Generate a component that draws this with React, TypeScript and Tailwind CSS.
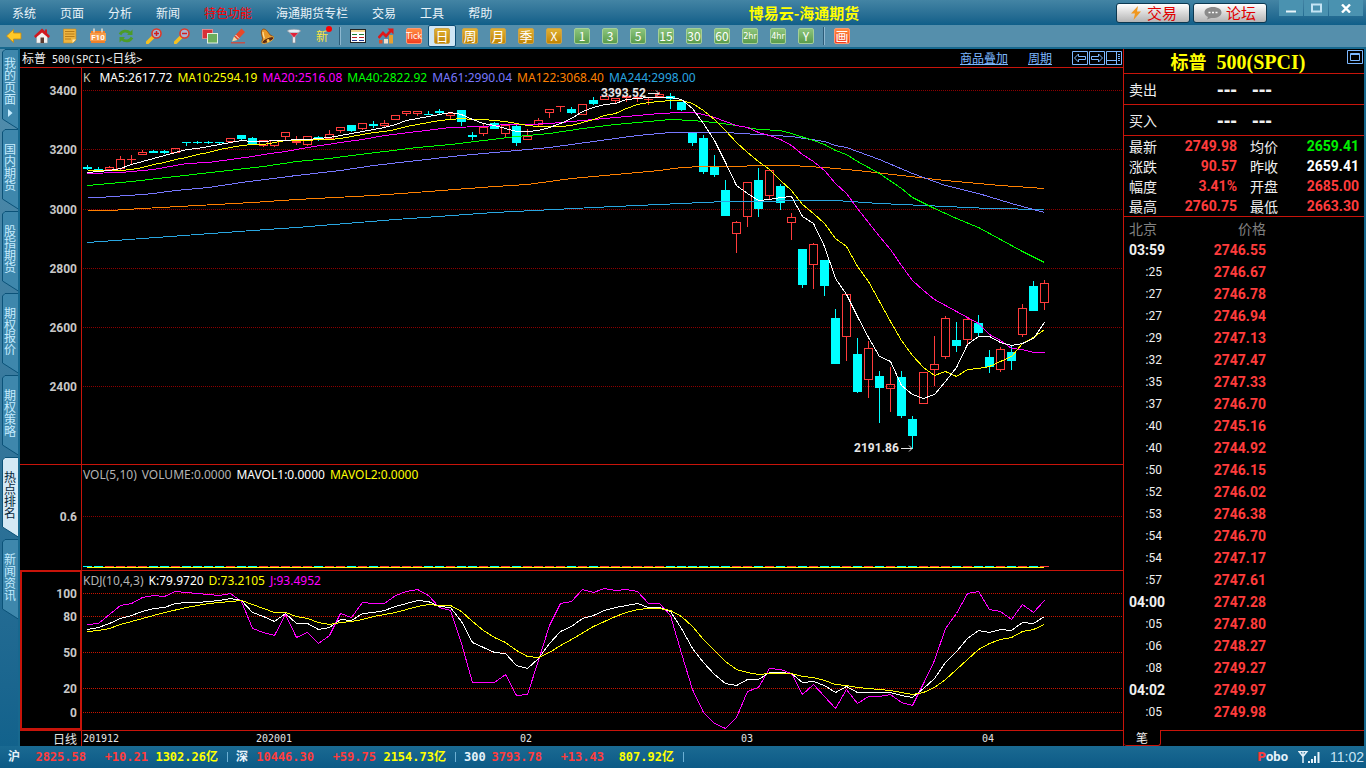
import type { ReactNode } from "react";

const STEP = 11;
const FIRST_X = 67.5;

// [body top, body bottom, wick top, wick bottom, direction]
type Candle = [number, number, number, number, "u" | "d"];

const CANDLES: Candle[] = [
  [167, 169, 165, 170, "d"], [169, 170, 167, 171, "d"], [167, 169, 166, 169, "u"], [159, 168, 156, 169, "u"],
  [159, 159, 155, 163, "u"], [152, 154, 150, 154, "u"], [151, 153, 150, 153, "d"], [151, 153, 150, 154, "d"],
  [148, 152, 148, 152, "u"], [142, 143, 142, 146, "d"], [142, 142, 141, 144, "d"], [142, 142, 141, 144, "d"],
  [142, 142, 142, 144, "d"], [138, 141, 138, 142, "u"], [135, 139, 135, 140, "d"], [138, 144, 137, 144, "d"],
  [140, 145, 140, 146, "u"], [140, 145, 140, 146, "u"], [132, 136, 132, 139, "u"], [141, 142, 136, 144, "u"],
  [136, 144, 136, 145, "u"], [137, 139, 136, 141, "d"], [134, 138, 130, 139, "u"], [127, 130, 127, 132, "u"],
  [125, 131, 125, 132, "d"], [123, 128, 123, 129, "u"], [124, 126, 121, 128, "d"], [123, 125, 120, 126, "u"],
  [115, 119, 115, 119, "u"], [111, 113, 111, 115, "u"], [111, 113, 111, 115, "u"], [114, 115, 111, 115, "d"],
  [111, 113, 109, 115, "d"], [113, 115, 113, 119, "u"], [110, 122, 110, 126, "d"], [135, 137, 132, 140, "d"],
  [127, 133, 124, 135, "u"], [123, 129, 122, 129, "d"], [125, 133, 125, 137, "u"], [126, 143, 125, 146, "d"],
  [136, 139, 129, 139, "u"], [120, 124, 118, 125, "u"], [109, 112, 109, 117, "u"], [106, 106, 106, 111, "u"],
  [109, 113, 107, 114, "d"], [104, 114, 104, 114, "u"], [100, 104, 97, 105, "d"], [96, 99, 96, 99, "u"],
  [98, 100, 98, 102, "u"], [96, 97, 96, 101, "u"], [97, 97, 96, 101, "u"], [99, 99, 97, 104, "u"],
  [94, 96, 92, 96, "u"], [96, 99, 93, 109, "d"], [102, 110, 102, 111, "d"], [133, 143, 133, 146, "d"],
  [138, 172, 135, 174, "d"], [167, 175, 155, 177, "d"], [190, 216, 180, 216, "d"], [222, 233, 221, 252, "u"],
  [182, 216, 182, 226, "u"], [180, 209, 168, 217, "d"], [170, 195, 170, 199, "u"], [186, 203, 184, 210, "d"],
  [217, 222, 213, 239, "u"], [249, 285, 249, 288, "d"], [244, 264, 243, 288, "u"], [260, 286, 260, 296, "d"],
  [318, 364, 309, 364, "d"], [294, 336, 294, 360, "u"], [354, 392, 338, 393, "d"], [348, 379, 341, 397, "u"],
  [376, 388, 371, 423, "d"], [384, 388, 367, 411, "u"], [377, 416, 371, 418, "d"], [419, 436, 416, 449, "d"],
  [372, 403, 372, 403, "u"], [364, 369, 336, 385, "u"], [318, 356, 316, 358, "u"], [340, 346, 322, 352, "d"],
  [319, 339, 317, 343, "u"], [323, 333, 315, 336, "d"], [357, 367, 350, 373, "d"], [349, 369, 347, 371, "u"],
  [352, 361, 345, 370, "d"], [308, 334, 304, 336, "u"], [286, 311, 281, 311, "d"], [283, 302, 280, 309, "u"],
];

// every line is a list of [bar index, y]
type Line = { color: string; points: number[][] };

const seq = (...ys: number[]) => ys.map((y, i) => [i, y]);

const MA_LINES: Line[] = [
  {
    color: "#29a6e0",
    points: [[0, 242], [5, 238], [10, 234], [15, 230], [19, 227], [28, 219], [37, 212], [46, 207], [54, 203], [58, 201], [68, 200], [72, 203], [78, 206], [82, 208], [87, 209]],
  },
  {
    color: "#ff8000",
    points: [[0, 210], [2, 210], [5, 208], [10, 205], [15, 202], [19, 199], [26, 195], [31, 191], [37, 186], [40, 184], [44, 178], [48, 174], [52, 170], [54, 167], [56, 166], [64, 165], [67, 167], [70, 170], [74, 175], [78, 180], [83, 185], [87, 188]],
  },
  {
    color: "#7878ff",
    points: [[0, 197], [1, 197], [5, 194], [6, 193], [8, 190], [11, 187], [14, 182], [19, 175], [23, 170], [26, 165], [30, 160], [34, 155], [38, 151], [42, 147], [46, 141], [50, 135], [53, 132], [58, 132], [61, 134], [64, 136], [67, 141], [68, 145], [69, 147], [72, 159], [75, 173], [78, 185], [81, 193], [84, 203], [87, 212]],
  },
  {
    color: "#00ff00",
    points: [[0, 185], [4, 181], [8, 176], [12, 171], [16, 166], [19, 161], [22, 158], [24, 155], [27, 151], [30, 147], [33, 144], [36, 140], [39, 136], [42, 133], [45, 128], [48, 124], [51, 121], [53, 119], [55, 120], [57, 122], [59, 125], [60, 127], [61, 129], [63, 130], [64, 133], [66, 140], [67, 144], [68, 150], [69, 154], [70, 161], [72, 173], [74, 188], [75, 197], [77, 208], [79, 218], [81, 227], [83, 239], [85, 251], [87, 262]],
  },
  {
    color: "#ff00ff",
    points: [[0, 173], [3, 172], [4, 171], [6, 169], [7, 167], [9, 163], [11, 162], [13, 159], [15, 156], [16, 154], [18, 151], [20, 147], [23, 142], [25, 139], [27, 135], [30, 131], [33, 127], [36, 126], [38, 124], [40, 124], [42, 123], [44, 121], [46, 119], [48, 117], [50, 115], [52, 113], [54, 112], [55, 112], [56, 114], [57, 117], [58, 121], [59, 125], [60, 127], [61, 132], [62, 135], [63, 139], [64, 145], [65, 154], [66, 161], [67, 170], [68, 183], [69, 193], [70, 208], [71, 222], [72, 236], [73, 249], [74, 265], [75, 280], [76, 290], [77, 299], [78, 305], [79, 311], [80, 317], [81, 323], [82, 334], [83, 340], [84, 348], [85, 349], [86, 352], [87, 352]],
  },
  {
    color: "#ffff00",
    points: seq(170, 170, 170, 170, 169, 167, 164, 162, 159, 157, 154, 152, 149, 147, 145, 144, 144, 142, 140, 140, 140, 139, 139, 138, 136, 134, 132, 131, 129, 126, 124, 122, 120, 119, 118, 119, 119, 120, 121, 123, 125, 126, 126, 126, 125, 122, 119, 115, 113, 108, 104, 102, 101, 100, 100, 103, 110, 119, 130, 142, 152, 161, 169, 180, 190, 204, 213, 223, 238, 246, 266, 281, 301, 321, 340, 355, 367, 375, 371, 376, 369, 368, 366, 361, 356, 343, 337, 329),
  },
  {
    color: "#ffffff",
    points: seq(172, 171, 170, 168, 164, 161, 158, 155, 152, 149, 148, 146, 144, 142, 140, 141, 141, 140, 140, 139, 139, 138, 137, 135, 133, 131, 129, 127, 124, 120, 118, 116, 114, 112, 114, 119, 123, 125, 128, 131, 131, 130, 127, 123, 118, 111, 107, 104, 103, 99, 98, 97, 97, 97, 99, 108, 123, 140, 162, 185, 193, 200, 199, 197, 196, 216, 223, 246, 278, 294, 316, 337, 356, 361, 385, 394, 398, 394, 381, 367, 344, 336, 336, 342, 345, 343, 338, 322),
  },
];

const KDJ_LINES: Line[] = [
  {
    color: "#ff00ff",
    points: seq(624, 623, 614, 605, 603, 597, 595, 596, 591, 592, 593, 594, 595, 593, 601, 628, 632, 635, 614, 637, 632, 643, 635, 613, 617, 602, 603, 603, 595, 591, 589, 595, 607, 610, 643, 682, 682, 682, 674, 695, 694, 660, 625, 603, 601, 589, 592, 588, 590, 589, 591, 603, 603, 615, 653, 689, 712, 723, 728, 717, 691, 687, 668, 669, 673, 694, 684, 696, 708, 689, 703, 696, 696, 694, 702, 705, 683, 660, 628, 613, 593, 591, 609, 611, 619, 604, 612, 600),
  },
  {
    color: "#ffffff",
    points: seq(629, 627, 623, 618, 615, 611, 608, 607, 603, 602, 602, 601, 600, 598, 600, 612, 616, 621, 613, 623, 623, 629, 627, 619, 620, 613, 612, 610, 606, 603, 600, 601, 606, 607, 621, 642, 647, 652, 653, 665, 668, 658, 643, 631, 626, 618, 615, 610, 607, 605, 603, 607, 607, 611, 628, 648, 662, 674, 683, 685, 679, 679, 672, 672, 673, 682, 681, 685, 692, 686, 692, 692, 692, 692, 695, 697, 688, 678, 662, 651, 638, 630, 632, 629, 630, 622, 623, 616),
  },
  {
    color: "#ffff00",
    points: [[0, 631], [1, 630], [2, 628], [3, 624], [5, 618], [7, 612], [9, 607], [11, 603], [14, 600], [15, 604], [16, 608], [17, 612], [18, 612], [19, 616], [20, 618], [21, 622], [22, 624], [23, 622], [24, 621], [25, 619], [26, 616], [28, 612], [30, 606], [31, 604], [32, 605], [33, 605], [34, 611], [35, 621], [36, 630], [37, 637], [38, 642], [39, 650], [40, 656], [41, 657], [42, 652], [43, 645], [44, 639], [46, 626], [48, 616], [49, 612], [50, 609], [51, 608], [52, 608], [53, 610], [54, 616], [55, 626], [56, 639], [57, 650], [58, 661], [59, 669], [60, 672], [61, 674], [62, 673], [64, 673], [65, 676], [66, 677], [67, 680], [68, 684], [69, 685], [70, 687], [72, 689], [73, 690], [74, 692], [75, 694], [76, 692], [77, 687], [78, 679], [79, 669], [80, 659], [81, 649], [82, 643], [83, 639], [84, 637], [85, 631], [86, 629], [87, 624]],
  },
];

const MENU = ["系统", "页面", "分析", "新闻", "特色功能", "海通期货专栏", "交易", "工具", "帮助"];
const TABS = ["我的页面", "国内期货", "股指期货", "期权报价", "期权策略", "热点排名", "新闻资讯"];
const PERIODS = ["日", "周", "月", "季", "X"];
const MINUTES = ["1", "3", "5", "15", "30", "60", "2hr", "4hr", "Y"];

const TICKS = [
  ["03:59", "2746.55"], [":25", "2746.67"], [":27", "2746.78"], [":27", "2746.94"], [":29", "2747.13"],
  [":32", "2747.47"], [":35", "2747.33"], [":37", "2746.70"], [":40", "2745.16"], [":40", "2744.92"],
  [":50", "2746.15"], [":52", "2746.02"], [":53", "2746.38"], [":54", "2746.70"], [":54", "2747.17"],
  [":57", "2747.61"], ["04:00", "2747.28"], [":05", "2747.80"], [":06", "2748.27"], [":08", "2749.27"],
  ["04:02", "2749.97"], [":05", "2749.98"],
];

const QUOTES = [
  ["最新", "2749.98", "均价", "2659.41", "text-[#00f000]"],
  ["涨跌", "90.57", "昨收", "2659.41", "text-white"],
  ["幅度", "3.41%", "开盘", "2685.00", "text-[#ff3c3c]"],
  ["最高", "2760.75", "最低", "2663.30", "text-[#ff3c3c]"],
];

const INDEXES = [
  ["沪", "2825.58", "+10.21", "1302.26亿"],
  ["深", "10446.30", "+59.75", "2154.73亿"],
  ["300", "3793.78", "+13.43", "807.92亿"],
];

const NUM = "font-['Roboto','Noto_Sans_CJK_SC',sans-serif] font-bold";
const MONO = "font-['DejaVu_Sans_Mono','Noto_Sans_CJK_SC',monospace]";

const x = (i: number) => FIRST_X + i * STEP;

function Lines({ lines }: { lines: Line[] }) {
  return (
    <g fill="none" shapeRendering="crispEdges">
      {lines.map((l, n) => (
        <polyline key={n} stroke={l.color} points={l.points.map(([i, y]) => `${x(i)},${y + 0.5}`).join(" ")} />
      ))}
    </g>
  );
}

function Grid({ rows, color }: { rows: [string, number][]; color: string }) {
  return (
    <>
      {rows.map(([label, y]) => (
        <g key={label}>
          <line x1="63" x2="100%" y1={y + 0.5} y2={y + 0.5} stroke={color} strokeDasharray="1 1" shapeRendering="crispEdges" />
          <text x="57" y={y + 5} textAnchor="end" fill="#c8c8c8" fontSize="12" fontWeight="700" fontFamily="Roboto, sans-serif">
            {label}
          </text>
        </g>
      ))}
      <line x1="61.5" x2="61.5" y1="0" y2="800" stroke="#c8140a" shapeRendering="crispEdges" />
    </>
  );
}

function Candles() {
  return (
    <g shapeRendering="crispEdges">
      {CANDLES.map(([top, bottom, high, low, dir], i) => {
        const cx = x(i);
        if (dir === "d") {
          return (
            <g key={i} fill="#00ffff">
              <rect x={cx - 0.5} y={high} width="1" height={low - high} />
              <rect x={cx - 4.5} y={top} width="9" height={Math.max(1, bottom - top)} />
            </g>
          );
        }
        return (
          <g key={i} stroke="#ff3c3c" fill="none">
            <path d={`M${cx} ${high}V${top}M${cx} ${bottom}V${low + 0.5}`} />
            {bottom === top ? (
              <path d={`M${cx - 4.5} ${top + 0.5}h9`} />
            ) : (
              <rect x={cx - 4} y={top + 0.5} width="8" height={bottom - top} />
            )}
          </g>
        );
      })}
    </g>
  );
}

function Marker({ px, y, text }: { px: number; y: number; text: string }) {
  return (
    <g>
      <text x={px} y={y + 4} fill="#e6e6e6" fontSize="12" fontWeight="700" fontFamily="Roboto, sans-serif">
        {text}
      </text>
      <path d={`M${px + 47} ${y + 0.5}h11M${px + 55} ${y - 2.5}l3 3l-3 3`} stroke="#e6e6e6" fill="none" />
    </g>
  );
}

function Legend({ items }: { items: [string, string][] }) {
  return (
    <div className="relative flex gap-[5px] pt-0.5 pl-[63px] font-['Noto_Sans',sans-serif] text-xs leading-4">
      {items.map(([text, cls]) => (
        <span key={text} className={cls}>
          {text}
        </span>
      ))}
    </div>
  );
}

function ToolButton({ label, active, children }: { label: string; active?: boolean; children: ReactNode }) {
  return (
    <button
      type="button"
      aria-label={label}
      className={`flex h-[22px] w-7 shrink-0 items-center justify-center ${active ? "rounded-[2px] border border-[#0b4c74] bg-[#cfe6f5]" : ""}`}
    >
      {children}
    </button>
  );
}

function Chip({ text, tone }: { text: string; tone: "gold" | "green" | "red" }) {
  const tones = {
    gold: "bg-linear-to-b from-[#e0b030] to-[#c08400] border-[#c9a24a]",
    green: "bg-linear-to-b from-[#8cc47c] to-[#5a9c4c] border-[#a4cf98]",
    red: "bg-linear-to-b from-[#ff8a40] to-[#f03c20] border-[#ff9870]",
  };
  const size = text.length > 2 ? "font-['DejaVu_Sans_Condensed',sans-serif] text-[9px]" : text.charCodeAt(0) > 255 ? "text-[13px]" : "text-xs";
  return (
    <span className={`flex h-4 w-4 items-center justify-center rounded-[2px] border leading-4 whitespace-nowrap text-white ${tones[tone]} ${size}`}>
      {text}
    </span>
  );
}

const ICONS: [string, ReactNode][] = [
  ["返回", <path key="a" d="M0.500 8L7.500 1.500V5H15V11H7.500V14.500z" fill="#ffc928" stroke="#c88a10" strokeWidth=".8" />],
  [
    "主页",
    <g key="b">
      <path d="M2.500 8V15H13.500V8L8 3z" fill="#f2f2f2" stroke="#999" strokeWidth=".5" />
      <path d="M0 8L8 0.500L11 3.300V1.500H13V5.200L16 8L14.500 10L8 4.500L1.500 10z" fill="#d01820" />
      <path d="M6.500 9.500h3.500v5.500H6.500z" fill="#5a3a30" />
    </g>,
  ],
  [
    "公告",
    <g key="c">
      <path d="M1.500 1H14V12L11 15H1.500z" fill="#eeb440" stroke="#c48820" strokeWidth=".6" />
      <path d="M3 3.500h9.500M3 6h9.500M3 8.500h9.500M3 11h6" stroke="#b87c18" />
      <path d="M14 11.500L10.500 15V11.500z" fill="#ffe9b0" />
    </g>,
  ],
  [
    "F10",
    <g key="d">
      <path d="M1 3H15V15H1z" fill="#f08028" />
      <path d="M0 5H16V13H0z" fill="#f69a48" />
      <path d="M4 0.500v4M12 0.500v4" stroke="#e8e0d0" strokeWidth="1.500" />
      <text x="8" y="12" fontSize="8" fontWeight="700" textAnchor="middle" fill="#fff" fontFamily="Roboto, sans-serif">F10</text>
    </g>,
  ],
  [
    "刷新",
    <g key="e" fill="none" stroke="#4c9c28" strokeWidth="2.800">
      <path d="M2 6.500C4 2.500 9 2 12 5" />
      <path d="M14 9.500C12 13.500 7 14 4 11" />
      <path d="M14.500 1.500V7H9zM1.500 14.500V9H7z" fill="#4c9c28" stroke="none" />
    </g>,
  ],
  [
    "放大",
    <g key="f">
      <path d="M1.500 14.500L7 9" stroke="#f6c020" strokeWidth="3.500" strokeLinecap="round" />
      <circle cx="10.500" cy="5.500" r="4.500" fill="#a8b4d0" stroke="#e03828" strokeWidth="1.600" />
      <path d="M8 5.500h5M10.500 3v5" stroke="#d02020" strokeWidth="1.500" />
    </g>,
  ],
  [
    "缩小",
    <g key="g">
      <path d="M1.500 14.500L7 9" stroke="#f6c020" strokeWidth="3.500" strokeLinecap="round" />
      <circle cx="10.500" cy="5.500" r="4.500" fill="#a8b4d0" stroke="#e03828" strokeWidth="1.600" />
      <path d="M8 5.500h5" stroke="#d02020" strokeWidth="1.500" />
    </g>,
  ],
  [
    "叠加",
    <g key="h">
      <rect x="0.500" y="1.500" width="10" height="9" fill="#d83038" stroke="#f09090" strokeWidth=".8" />
      <rect x="5.500" y="5.500" width="10" height="9.500" fill="#6cae5c" stroke="#e4f0e0" strokeWidth="1" />
    </g>,
  ],
  [
    "画笔",
    <g key="i">
      <path d="M1 14.800h14" stroke="#e04030" strokeWidth="1.200" />
      <path d="M4 8.500L11.500 0.500L15 4L7.500 12z" fill="#e84828" />
      <path d="M2 13.500L4 8.500L7.500 12z" fill="#f4d8a0" />
      <path d="M5.500 7L9 10.500" stroke="#fff" />
    </g>,
  ],
  [
    "预警",
    <g key="j" transform="rotate(-25 8 8)">
      <path d="M8 0.500C5 1 4.500 5 4 8.500L1.500 12H14.500L12 8.500C11.500 5 11 1 8 0.500z" fill="#e89828" stroke="#8c4810" strokeWidth=".8" />
      <path d="M7 3C6 5 6 7 5.500 9.500" stroke="#ffe09c" fill="none" strokeWidth="1.300" />
      <ellipse cx="8" cy="12.500" rx="6.500" ry="2.200" fill="#5c2810" stroke="#f0b040" strokeWidth=".8" />
      <circle cx="8" cy="13" r="1.500" fill="#ffc850" />
    </g>,
  ],
  [
    "筛选",
    <g key="k">
      <path d="M1.500 2.500L6.500 8.500V15H9.500V8.500L14.500 2.500z" fill="#e4e8ec" stroke="#7c8894" strokeWidth=".7" />
      <ellipse cx="8" cy="3" rx="6.500" ry="1.800" fill="#e8eef4" stroke="#8894a0" strokeWidth=".6" />
      <path d="M4 5h8L8 9.500z" fill="#e02038" />
    </g>,
  ],
];

function Separator() {
  return <span className="mx-[3px] h-[18px] w-0.5 shrink-0 border-r border-[#8db8d0] bg-[#2c5c78]" />;
}

function Toolbar() {
  return (
    <div className="flex h-6 shrink-0 items-center overflow-hidden border-b-2 border-[#17688e] bg-[#558fac]">
      {ICONS.map(([label, art]) => (
        <ToolButton key={label} label={label}>
          <svg width="16" height="16" viewBox="0 0 16 16">{art}</svg>
        </ToolButton>
      ))}
      <ToolButton label="新">
        <span className="relative text-xs leading-4 text-[#ffe640]">
          新
          <i className="absolute -top-0.5 -right-1 h-1.5 w-1.5 rounded-full bg-[#ff0000]" />
        </span>
      </ToolButton>
      <Separator />
      <ToolButton label="报价">
        <svg width="16" height="16" viewBox="0 0 16 16" shapeRendering="crispEdges">
          <path d="M.5 1.500h15v13H.5z" fill="#fff" stroke="#222" />
          <path d="M1 2h14v2H1z" fill="#f4d890" />
          <path d="M2 6.500h5M9 6.500h5" stroke="#188030" />
          <path d="M2 9.500h5M9 9.500h5" stroke="#c02020" />
          <path d="M2 12.500h5M9 12.500h5" stroke="#203890" />
        </svg>
      </ToolButton>
      <ToolButton label="走势">
        <svg width="16" height="16" viewBox="0 0 16 16">
          <path d="M1 12h3.500v3.500H1z" fill="#e05028" />
          <path d="M6 11h4v4.500H6z" fill="#f0e0d0" />
          <path d="M11 7h4v8.500H11z" fill="#e8a030" />
          <path d="M0.500 10L5 5L8 8L13 2.500" fill="none" stroke="#e01818" strokeWidth="2.600" />
          <path d="M9.500 0.500H15.500V6.500z" fill="#e01818" />
        </svg>
      </ToolButton>
      <ToolButton label="Tick">
        <Chip text="Tick" tone="red" />
      </ToolButton>
      {PERIODS.map((p) => (
        <ToolButton key={p} label={p} active={p === "日"}>
          <Chip text={p} tone="gold" />
        </ToolButton>
      ))}
      {MINUTES.map((p) => (
        <ToolButton key={p} label={p}>
          <Chip text={p} tone="green" />
        </ToolButton>
      ))}
      <Separator />
      <ToolButton label="画">
        <Chip text="画" tone="red" />
      </ToolButton>
    </div>
  );
}

function Header() {
  return (
    <header className="flex h-[25px] shrink-0 items-center bg-linear-to-b from-[#4384a4] to-[#0f5f89]">
      <nav className="flex gap-6 pl-3 text-xs text-[#e8f2f8]">
        {MENU.map((m) => (
          <a key={m} href="#" className={m === "特色功能" ? "text-[#ff0000]" : ""}>
            {m}
          </a>
        ))}
      </nav>
      <h1 className="flex-1 text-center text-[15px] leading-6 font-bold text-[#ffff00]">博易云-海通期货</h1>
      <div className="flex gap-[3px] text-[15px] leading-5 text-[#e00000]">
        <button type="button" className="flex h-5 w-[74px] items-center justify-center gap-1 rounded-[3px] border border-[#0c3850] bg-linear-to-b from-white to-[#b4b4b4]">
          <svg width="14" height="16" viewBox="0 0 14 16">
            <path d="M9 1L2 8.500H6L4.500 15L12 6.500H8z" fill="#f09820" />
          </svg>
          交易
        </button>
        <button type="button" className="flex h-5 w-[74px] items-center justify-center gap-1 rounded-[3px] border border-[#0c3850] bg-linear-to-b from-white to-[#b4b4b4]">
          <svg width="18" height="14" viewBox="0 0 18 14">
            <path d="M9 1C4 1 .5 3.300.5 6.500C.5 8.500 2 10 4 11L3 13.500L7 12C13 12.500 17.500 10 17.500 6.500C17.500 3.300 14 1 9 1z" fill="#8a8a8a" />
            <path d="M4.500 6.500h2M8 6.500h2M11.500 6.500h2" stroke="#fff" strokeWidth="1.600" />
          </svg>
          论坛
        </button>
      </div>
      <div className="ml-3 flex gap-px self-start pr-[3px]">
        <button type="button" aria-label="最小化" className="flex h-4 w-6 items-center justify-center bg-[#4a92b0]">
          <svg width="10" height="10"><path d="M0 8.500h10" stroke="#e8f4fa" strokeWidth="2" /></svg>
        </button>
        <button type="button" aria-label="最大化" className="flex h-4 w-6 items-center justify-center bg-[#4a92b0]">
          <svg width="11" height="10"><path d="M1 1.500h9v7H1z" fill="none" stroke="#c4e4f4" strokeWidth="2" /></svg>
        </button>
        <button type="button" aria-label="关闭" className="flex h-4 w-[34px] items-center justify-center bg-[#4a92b0]">
          <svg width="10" height="9"><path d="M1 .5L9 8.500M9 .5L1 8.500" stroke="#fff" strokeWidth="2.400" /></svg>
        </button>
      </div>
    </header>
  );
}

function Sidebar() {
  return (
    <aside className="w-5 shrink-0 border-r-2 border-[#17688e] bg-linear-to-b from-[#5590ae] to-[#12628c] pl-0.5">
      {TABS.map((t) => {
        const on = t === "热点排名";
        const first = t === "我的页面";
        return (
          <button
            key={t}
            type="button"
            className={`relative flex w-4 flex-col items-center ${first ? "h-20" : "h-[82px]"} ${on ? "text-[#06283c]" : "text-[#c4ecff]"}`}
          >
            <svg className="absolute inset-0" width="16" height="82">
              <path d="M17 .5H3L.5 3V70L17 80.500" fill={on ? "#d4e9f5" : "#3e87ac"} stroke="#0b5278" />
            </svg>
            <span className={`relative w-3 text-xs leading-3 break-all ${first ? "pt-2" : "pt-3.5"}`}>{t}</span>
            {first && (
              <svg className="relative mt-1" width="5" height="8"><path d="M0 0V8L4.500 4z" fill="#c4ecff" /></svg>
            )}
          </button>
        );
      })}
    </aside>
  );
}

function ChartArea() {
  return (
    <main className="flex min-w-0 flex-1 flex-col bg-black text-xs">
      <div className="flex h-[19px] shrink-0 items-center border-b border-[#c8140a] pl-0.5">
        <h2 className="flex-1 text-[#f0f0f0]">
          标普<span className={`${MONO} text-[10px]`}> 500(SPCI)&lt;</span>日线<span className={`${MONO} text-[10px]`}>&gt;</span>
        </h2>
        <div className="flex items-center text-[#7db8ff]">
          <a href="#" className="mr-5 underline">商品叠加</a>
          <a href="#" className="mr-5 underline">周期</a>
          <button type="button" aria-label="左移" className="mr-px">
            <svg width="16" height="14" fill="none" stroke="#7db8ff"><path d="M.5.5h15v13H.5zM2.500 7L6.500 3V5.500H13.500V8.500H6.500V11z" /></svg>
          </button>
          <button type="button" aria-label="右移" className="mr-px">
            <svg width="16" height="14" fill="none" stroke="#7db8ff"><path d="M.5.5h15v13H.5zM13.500 7L9.500 3V5.500H2.500V8.500H9.500V11z" /></svg>
          </button>
          <button type="button" aria-label="布局" className="mr-px">
            <svg width="16" height="14" fill="none" stroke="#7db8ff"><path d="M.5.5h15v13H.5zM10.500.5V13.500M.5 9.500H10.500M12 3.500h2M12 5.500h2M12 7.500h2M12 9.500h2" /></svg>
          </button>
        </div>
      </div>

      <section className="relative flex-1 overflow-hidden">
        <svg className="absolute inset-0 h-full w-full">
          <g transform="translate(0 -68)">
            <Grid rows={[["3400", 90], ["3200", 149], ["3000", 209], ["2800", 268], ["2600", 327], ["2400", 386]]} color="#8c0000" />
            <Candles />
            <Lines lines={MA_LINES} />
            <Marker px={581} y={93} text="3393.52" />
            <Marker px={834} y={448} text="2191.86" />
          </g>
        </svg>
        <Legend
          items={[
            ["K", "mr-1 text-[#c8c8b0]"],
            ["MA5:2617.72", "text-white"],
            ["MA10:2594.19", "text-[#ffff00]"],
            ["MA20:2516.08", "text-[#ff00ff]"],
            ["MA40:2822.92", "text-[#00ff00]"],
            ["MA61:2990.04", "text-[#7878ff]"],
            ["MA122:3068.40", "text-[#ff8000]"],
            ["MA244:2998.00", "text-[#29a6e0]"],
          ]}
        />
      </section>

      <section className="relative h-[106px] shrink-0 overflow-hidden border-t border-[#c8140a]">
        <svg className="absolute inset-0 h-full w-full">
          <g transform="translate(0 -465)">
            <Grid rows={[["0.6", 516]]} color="#8c0000" />
            {CANDLES.map((c, i) => (
              <rect key={i} x={x(i) - 4.5} y="566" width="9" height="1" fill={c[4] === "u" ? "#ff3c3c" : "#00ffff"} shapeRendering="crispEdges" />
            ))}
            <rect x={x(0) - 0.5} y="567" width={STEP * 87} height="1" fill="#ffff00" />
          </g>
        </svg>
        <Legend
          items={[
            ["VOL(5,10)", "text-[#b4b4b4]"],
            ["VOLUME:0.0000", "text-[#b4b4b4]"],
            ["MAVOL1:0.0000", "text-white"],
            ["MAVOL2:0.0000", "text-[#ffff00]"],
          ]}
        />
      </section>

      <section className="relative h-[161px] shrink-0 overflow-hidden border-t border-b border-[#c8140a]">
        <svg className="absolute inset-0 h-full w-full">
          <g transform="translate(0 -571)">
            <Grid rows={[["100", 593], ["80", 616], ["50", 652], ["20", 688], ["0", 712]]} color="#c81400" />
            <rect x="1" y="571" width="60" height="158" fill="none" stroke="#c8140a" strokeWidth="2" />
            <Lines lines={KDJ_LINES} />
          </g>
        </svg>
        <Legend
          items={[
            ["KDJ(10,4,3)", "text-[#b4b4b4]"],
            ["K:79.9720", "text-white"],
            ["D:73.2105", "text-[#ffff00]"],
            ["J:93.4952", "text-[#ff00ff]"],
          ]}
        />
      </section>

      <div className="flex h-[15px] shrink-0 leading-[15px] text-[#e6e6e6]">
        <span className="w-[62px] border-r border-[#c8140a] pr-1 text-right">日线</span>
        <svg className="h-full flex-1" fill="#e6e6e6" fontSize="10" fontFamily="DejaVu Sans Mono, monospace">
          <text x="1" y="11">201912</text>
          <text x="174" y="11">202001</text>
          <text x="438" y="11">02</text>
          <text x="659" y="11">03</text>
          <text x="900" y="11">04</text>
        </svg>
      </div>
    </main>
  );
}

function QuotePanel() {
  return (
    <aside className="mr-0.5 flex w-[241px] shrink-0 flex-col border-l border-[#c8140a] bg-black text-sm text-[#f0f0f0]">
      <div className="relative flex h-[25px] items-center justify-center border-b border-[#c8140a] pr-3">
        <h2 className="text-lg leading-6 font-bold whitespace-pre text-[#ffff00]">
          标普<span className="font-['Liberation_Serif',serif] text-xl leading-6">  500(SPCI)</span>
        </h2>
        <button type="button" aria-label="放大窗口" className="absolute top-px right-px">
          <svg width="16" height="14" fill="none" stroke="#7db8ff"><path d="M.5.5h15v13H.5z" /><path d="M3.500 3.500h9v7h-9zM3.500 4.500h9" /></svg>
        </button>
      </div>
      {["卖出", "买入"].map((t) => (
        <div key={t} className="flex h-[31px] items-center border-b border-[#c8140a] pl-[5px]">
          <span className="w-[88px]">{t}</span>
          <span className="w-[35px] font-['Liberation_Sans',sans-serif] text-xl leading-7 font-bold">---</span>
          <span className="font-['Liberation_Sans',sans-serif] text-xl leading-7 font-bold">---</span>
        </div>
      ))}
      <table className="w-full table-fixed border-b border-[#c8140a]">
        <tbody>
          {QUOTES.map(([a, av, b, bv, tone]) => (
            <tr key={a} className="h-5 leading-5">
              <th scope="row" className="w-[45px] pl-[5px] text-left font-normal">{a}</th>
              <td className={`${NUM} w-[68px] text-right text-[#ff3c3c]`}>{av}</td>
              <th scope="row" className="w-[49px] pl-[13px] text-left font-normal">{b}</th>
              <td className={`${NUM} pr-[5px] text-right ${tone}`}>{bv}</td>
            </tr>
          ))}
        </tbody>
      </table>
      <table className="w-full table-fixed">
        <thead>
          <tr className="h-[22px] leading-[22px] text-[#808080]">
            <th scope="col" className="w-[50px] pl-[5px] text-left font-normal">北京</th>
            <th scope="col" className="w-[92px] text-right font-normal">价格</th>
            <th />
          </tr>
        </thead>
        <tbody>
          {TICKS.map(([time, price], i) => (
            <tr key={i} className="h-[22px] leading-[22px]">
              <td className={time.length > 3 ? `${NUM} pl-[5px]` : "pr-3 text-right font-['Roboto',sans-serif] text-xs leading-[22px]"}>{time}</td>
              <td className={`${NUM} text-right text-[#ff3c3c]`}>{price}</td>
              <td />
            </tr>
          ))}
        </tbody>
      </table>
      <div className="mt-auto flex h-4 shrink-0">
        <button type="button" className="w-[37px] rounded-b-[3px] border-r border-b border-[#c8140a] text-xs leading-[14px]">笔</button>
        <span className="flex-1 border-t border-[#c8140a]" />
      </div>
    </aside>
  );
}

function StatusBar() {
  return (
    <footer className={`${MONO} flex h-[22px] shrink-0 items-center bg-linear-to-b from-[#1a6a92] to-[#0c5a86] text-xs font-bold`}>
      {INDEXES.map(([name, price, change, amount]) => (
        <div key={name} className="flex w-[228px] shrink-0 items-center border-r border-[#6cb0d4] pl-2 leading-[10px]">
          <span className="w-5 text-[#e6f2fa]">{name}</span>
          <span className="w-[58px] text-right text-[#ff3c3c]">{price}</span>
          <span className="w-[62px] text-right text-[#ff3c3c]">{change}</span>
          <span className="w-[70px] text-right text-[#ffff00]">{amount}</span>
        </div>
      ))}
      <span className={`${NUM} ml-auto text-[13px] text-[#e6f2fa]`}>
        <b className="text-[#ff3c3c]">P</b>obo
      </span>
      <svg className="mx-2.5" width="22" height="12" viewBox="0 0 22 12">
        <path d="M1 .5H9L5 5.500zM5 .5V12" fill="none" stroke="#e6f2fa" strokeWidth="1.500" />
        <path d="M11 10v2M14 8v4M17 5v7M20.500 1v11" stroke="#e6f2fa" strokeWidth="2" />
      </svg>
      <time className="pr-0.5 font-['Liberation_Sans',sans-serif] text-sm font-normal text-[#c8e4f4]">11:02</time>
    </footer>
  );
}

export default function App() {
  return (
    <div className="flex h-screen flex-col overflow-hidden bg-[#17688e] font-['Noto_Sans_CJK_SC',sans-serif]">
      <Header />
      <Toolbar />
      <div className="flex min-h-0 flex-1">
        <Sidebar />
        <ChartArea />
        <QuotePanel />
      </div>
      <StatusBar />
    </div>
  );
}
